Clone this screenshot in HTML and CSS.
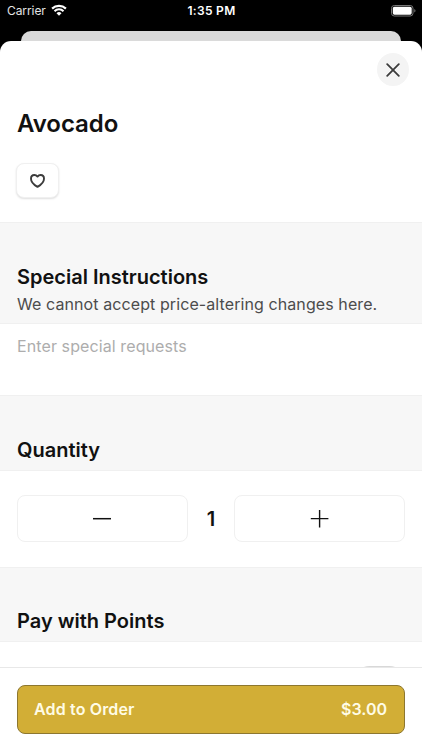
FILE: index.html
```html
<!DOCTYPE html>
<html lang="en">
<head>
<meta charset="utf-8">
<title>Avocado</title>
<link rel="stylesheet" href="styles.css">
</head>
<body>
<div class="screen">
  <header class="status">
    <div class="status-left">
      <span class="carrier">Carrier</span>
      <svg class="wifi" viewBox="0 0 16 12" width="16" height="12" fill="none" stroke="#fff">
        <path d="M1.1 4.6a10 10 0 0 1 13.8 0" stroke-width="2.2"/>
        <path d="M3.5 7.2a6.4 6.4 0 0 1 9 0" stroke-width="2"/>
        <path d="M8 11.8 5.5 9.2a3.5 3.5 0 0 1 5 0Z" fill="#fff" stroke="none"/>
      </svg>
    </div>
    <span class="time">1:35 PM</span>
    <div class="status-right">
      <svg width="25" height="12" viewBox="0 0 25 12">
        <rect x=".5" y=".5" width="21.5" height="10.5" rx="2.8" fill="none" stroke="#777"/>
        <rect x="1.8" y="1.8" width="18.9" height="7.9" rx="1.6" fill="#fff"/>
        <path d="M23.3 3.9v3.6q1.2-.5 1.2-1.8t-1.2-1.8Z" fill="#777"/>
      </svg>
    </div>
  </header>
  <div class="peek"></div>
  <main class="sheet">
    <section class="product">
      <button class="close" aria-label="Close">
        <svg width="14" height="14" viewBox="0 0 14 14" fill="none" stroke="#3c3c3c" stroke-width="1.8" stroke-linecap="round"><path d="M1.2 1.2l11.6 11.6M12.8 1.2 1.2 12.8"/></svg>
      </button>
      <h1>Avocado</h1>
      <button class="favorite" aria-label="Favorite">
        <svg width="15" height="14" viewBox="0 0 15 14" fill="none" stroke="#3c3c3c" stroke-width="1.9" stroke-linejoin="round"><path d="M7.5 2.6C6.5 1.3 5.4 1 4.4 1 2.4 1 1 2.6 1 4.7c0 3.4 3.3 6.3 6.5 8.2 3.2-1.9 6.5-4.8 6.5-8.2C14 2.6 12.6 1 10.6 1c-1 0-2.1.3-3.1 1.6Z"/></svg>
      </button>
    </section>
    <section class="heading heading-note">
      <h2>Special Instructions</h2>
      <p>We cannot accept price-altering changes here.</p>
    </section>
    <div class="requests">Enter special requests</div>
    <section class="heading"><h2>Quantity</h2></section>
    <div class="stepper">
      <button class="step" aria-label="Decrease"><svg width="19" height="18" viewBox="0 0 19 18" stroke="#111" stroke-width="1.5"><path d="M0 8.7h18"/></svg></button>
      <span class="count">1</span>
      <button class="step" aria-label="Increase"><svg width="19" height="18" viewBox="0 0 19 18" stroke="#111" stroke-width="1.4"><path d="M.8 8.6h17.6M9.6 0v17.4"/></svg></button>
    </div>
    <section class="heading heading-points"><h2>Pay with Points</h2></section>
    <div class="points"><span class="switch"></span></div>
  </main>
  <footer class="footer">
    <button class="order"><span class="order-label">Add to Order</span><span class="order-price">$3.00</span></button>
  </footer>
</div>
</body>
</html>
```
FILE: styles.css
```css
* { box-sizing: border-box; }
body {
  margin: 0;
  background: #000;
  color: #111;
  font-family: Inter, "Liberation Sans", sans-serif;
}
h1, h2, p { margin: 0; font-weight: 600; }
button { padding: 0; border: 0; font: inherit; color: inherit; background: #fff; }
svg { display: block; }
.screen {
  display: flex;
  flex-direction: column;
  width: 422px;
  height: 750px;
  overflow: hidden;
  background: #000;
}
.status {
  display: grid;
  grid-template-columns: 1fr auto 1fr;
  align-items: center;
  height: 22px;
  margin-bottom: 9px;
  padding: 0 6px 0 7px;
  color: #fff;
}
.status-left { display: flex; align-items: center; gap: 5px; }
.status-right { display: flex; justify-content: flex-end; }
.carrier { padding-bottom: 1px; font-size: 12px; color: #e4e4e4; letter-spacing: -.08px; }
.wifi { margin-top: -2px; }
.time { padding-bottom: 1px; font-size: 12px; font-weight: 600; letter-spacing: .3px; }
.peek {
  flex: none;
  height: 10px;
  margin: 0 21px;
  border-radius: 10px 10px 0 0;
  background: #dadada;
}
.sheet {
  flex: none;
  height: 626px;
  overflow: hidden;
  border-radius: 11px 11px 0 0;
  background: #fff;
}
.product {
  display: flex;
  flex-direction: column;
  align-items: flex-start;
  height: 181px;
  padding: 12px 13px 0 17px;
}
.close {
  display: grid;
  place-items: center;
  align-self: flex-end;
  width: 32px;
  height: 33px;
  border-radius: 50%;
  background: #f4f4f4;
}
h1 { margin-top: 22px; font-size: 24px; line-height: 32px; letter-spacing: -.05px; }
.favorite {
  display: grid;
  place-items: center;
  width: 43px;
  height: 35px;
  margin: 23px 0 0 -.6px;
  border: 1px solid #f0f0f0;
  border-radius: 8px;
  box-shadow: 0 1px 2px rgba(0, 0, 0, .13);
}
.heading {
  height: 76px;
  padding: 41px 17px 0;
  border: 1px solid #f0f0f0;
  border-width: 1px 0;
  background: #f7f7f7;
}
.heading-note { height: 102px; }
.heading-points { height: 75px; padding-top: 40px; }
h2 { font-size: 20px; line-height: 26px; }
.heading p { margin-top: 2px; font-size: 16px; line-height: 24px; font-weight: 400; letter-spacing: .09px; color: #4c4c4c; white-space: nowrap; }
.requests { height: 71px; padding: 10px 17px; font-size: 16px; line-height: 24px; letter-spacing: .1px; color: #adadad; }
.stepper {
  display: grid;
  grid-template-columns: 171px 1fr 171px;
  align-items: start;
  height: 96px;
  padding: 24px 17px;
}
.step {
  display: grid;
  place-items: center;
  height: 47px;
  border: 1px solid #f0f0f0;
  border-radius: 8px;
}
.count { font-size: 20px; line-height: 48px; font-weight: 600; text-align: center; }
.points { display: flex; justify-content: flex-end; padding: 24px 17px; }
.switch { width: 51px; height: 31px; border-radius: 16px; background: #d8d8d8; }
.footer {
  flex: 1;
  padding: 17px 17px 0;
  border-top: 1px solid #e8e8e8;
  background: #fff;
}
.order {
  display: flex;
  align-items: center;
  justify-content: space-between;
  width: 388px;
  height: 49px;
  padding: 0 17px 2px 16px;
  border: 1px solid #8d772f;
  border-radius: 8px;
  background: #d2ae36;
  color: #fffce6;
  font-size: 16px;
  font-weight: 600;
}
.order-label { letter-spacing: .15px; }
```
